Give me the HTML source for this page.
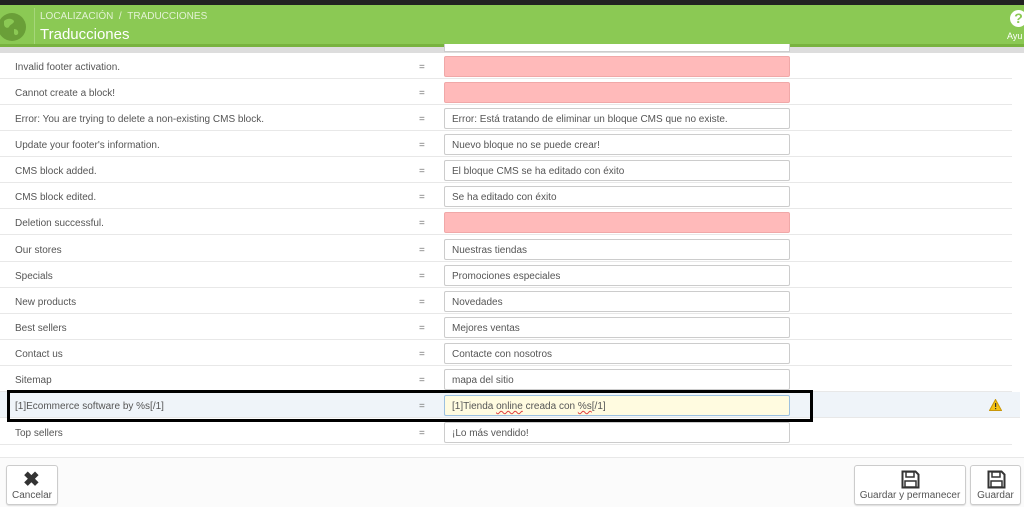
<!DOCTYPE html>
<html><head><meta charset="utf-8"><style>
*{box-sizing:border-box;margin:0;padding:0}
body{width:1024px;height:507px;overflow:hidden;background:#fff;font-family:"Liberation Sans",sans-serif;position:relative;color:#555}
.top{position:absolute;left:0;top:0;width:1024px;height:5px;background:#222}
.hdr{position:absolute;left:0;top:5px;width:1024px;height:42px;background:#8bc954;border-bottom:3px solid #78b33f}
.strip{position:absolute;left:0;top:47px;width:1024px;height:6px;background:#ddd}
.row{position:absolute;left:0;width:1012px;height:26px;border-bottom:1px solid #e8e8e8;font-size:10px}
.row .l{position:absolute;left:15px;top:9px}
.row .eq{position:absolute;left:419px;top:9px;color:#777}
.row .in{position:absolute;left:444px;top:3px;width:346px;height:21px;border:1px solid #ccc;border-radius:2px;background:#fff;padding:5px 7px;color:#555}
.row .in.p{background:#ffbaba;border-color:#f0a8a8}
.btn{position:absolute;top:465px;height:40px;border:1px solid #ccc;border-radius:3px;background:#fff;font-size:10px;color:#555;text-align:center;box-shadow:0 1px 1px #ddd}
.btn span{position:absolute;bottom:3px;left:0;right:0}
</style></head><body>
<div class="top"></div>
<div class="hdr">
<svg style="position:absolute;left:-4px;top:6px" width="32" height="32" viewBox="0 0 32 32"><circle cx="16" cy="16" r="14" fill="#6a9f38"/><path d="M8 10c3-3 8-3 10 0 0 3-4 3-5 6-2 2-5 0-5-3z M18 18c3 0 5 2 4 5-2 2-4 1-4-1z" fill="#8bc954"/></svg>
<div style="position:absolute;left:34px;top:3px;width:1px;height:36px;background:#a6d67a"></div>
<div style="position:absolute;left:40px;top:6px;font-size:10px;color:#e3f2d4">LOCALIZACIÓN &nbsp;/ &nbsp;TRADUCCIONES</div>
<div style="position:absolute;left:40px;top:21px;font-size:15px;color:#fff">Traducciones</div>
<div style="position:absolute;left:1010px;top:5px;width:17px;height:17px;border-radius:50%;background:#fff;color:#8bc954;font-weight:bold;font-size:14px;text-align:center;line-height:17px">?</div>
<div style="position:absolute;left:1007px;top:26px;font-size:9px;color:#fff">Ayu</div>
</div>
<div class="strip"></div>
<div style="position:absolute;left:444px;top:44px;width:346px;height:8px;border:1px solid #ccc;border-top:none;background:#fff"></div>

<div class="row" style="top:53px"><div class="l">Invalid footer activation.</div><div class="eq">=</div><div class="in p"></div></div>
<div class="row" style="top:79px"><div class="l">Cannot create a block!</div><div class="eq">=</div><div class="in p"></div></div>
<div class="row" style="top:105px"><div class="l">Error: You are trying to delete a non-existing CMS block.</div><div class="eq">=</div><div class="in">Error: Está tratando de eliminar un bloque CMS que no existe.</div></div>
<div class="row" style="top:131px"><div class="l">Update your footer's information.</div><div class="eq">=</div><div class="in">Nuevo bloque no se puede crear!</div></div>
<div class="row" style="top:157px"><div class="l">CMS block added.</div><div class="eq">=</div><div class="in">El bloque CMS se ha editado con éxito</div></div>
<div class="row" style="top:183px"><div class="l">CMS block edited.</div><div class="eq">=</div><div class="in">Se ha editado con éxito</div></div>
<div class="row" style="top:209px"><div class="l">Deletion successful.</div><div class="eq">=</div><div class="in p"></div></div>
<div class="row" style="top:236px"><div class="l">Our stores</div><div class="eq">=</div><div class="in">Nuestras tiendas</div></div>
<div class="row" style="top:262px"><div class="l">Specials</div><div class="eq">=</div><div class="in">Promociones especiales</div></div>
<div class="row" style="top:288px"><div class="l">New products</div><div class="eq">=</div><div class="in">Novedades</div></div>
<div class="row" style="top:314px"><div class="l">Best sellers</div><div class="eq">=</div><div class="in">Mejores ventas</div></div>
<div class="row" style="top:340px"><div class="l">Contact us</div><div class="eq">=</div><div class="in">Contacte con nosotros</div></div>
<div class="row" style="top:366px"><div class="l">Sitemap</div><div class="eq">=</div><div class="in">mapa del sitio</div></div>
<div class="row" style="top:392px;background:#eff4f9;width:1020px"><div class="l">[1]Ecommerce software by %s[/1]</div><div class="eq">=</div><div class="in" style="background:#fffbe0;border-color:#9cc0e0">[1]Tienda <span style="text-decoration:underline wavy #e04040">online</span> creada con <span style="text-decoration:underline wavy #e04040">%s</span>[/1]</div>
<svg style="position:absolute;left:989px;top:7px" width="13" height="12" viewBox="0 0 13 12"><path d="M6.5 0.5L12.5 11.5H0.5Z" fill="#f5c211" stroke="#c8960a"/><rect x="6" y="4" width="1.2" height="4" fill="#333"/><rect x="6" y="9" width="1.2" height="1.2" fill="#333"/></svg></div>
<div style="position:absolute;left:7px;top:390px;width:806px;height:32px;border:3px solid #000"></div>
<div class="row" style="top:419px"><div class="l">Top sellers</div><div class="eq">=</div><div class="in">¡Lo más vendido!</div></div>

<div style="position:absolute;left:0;top:457px;width:1024px;height:50px;background:#fbfbfb;border-top:1px solid #e8e8e8"></div>
<div class="btn" style="left:6px;width:52px"><div style="position:absolute;left:16px;top:4px;font-size:20px;font-weight:bold;color:#333;line-height:20px">✖</div><span>Cancelar</span></div>
<div class="btn" style="left:854px;width:112px"><svg style="position:absolute;left:46px;top:4px" width="19" height="19" viewBox="0 0 19 19"><path d="M1.5 1.5h13l3 3v13h-16z" fill="none" stroke="#333" stroke-width="2"/><rect x="5" y="2" width="8" height="5" fill="none" stroke="#333" stroke-width="1.5"/><rect x="4" y="11" width="11" height="6" fill="none" stroke="#333" stroke-width="1.5"/></svg><span>Guardar y permanecer</span></div>
<div class="btn" style="left:970px;width:51px"><svg style="position:absolute;left:16px;top:4px" width="19" height="19" viewBox="0 0 19 19"><path d="M1.5 1.5h13l3 3v13h-16z" fill="none" stroke="#333" stroke-width="2"/><rect x="5" y="2" width="8" height="5" fill="none" stroke="#333" stroke-width="1.5"/><rect x="4" y="11" width="11" height="6" fill="none" stroke="#333" stroke-width="1.5"/></svg><span>Guardar</span></div>
</body></html>
